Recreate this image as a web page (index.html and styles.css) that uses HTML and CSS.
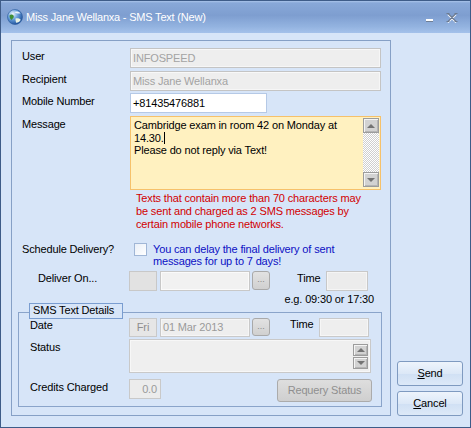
FILE: index.html
```html
<!DOCTYPE html>
<html>
<head>
<meta charset="utf-8">
<title>SMS Text</title>
<link rel="stylesheet" href="styles.css">
</head>
<body>
<div class="window">
  <div class="titlebar">
    <svg class="app-icon" viewBox="0 0 16 16" width="16" height="16">
      <defs>
        <radialGradient id="globe" cx="35%" cy="30%" r="75%">
          <stop offset="0" stop-color="#f2f8ff"/>
          <stop offset="0.45" stop-color="#6aa2dc"/>
          <stop offset="1" stop-color="#1b4d98"/>
        </radialGradient>
      </defs>
      <circle cx="8" cy="8" r="7.5" fill="url(#globe)"/>
      <path d="M2.5 6.5c1.5-1.5 3.5-1 4.2.6.6 1.6-1 2.4-2 3.8-1.3-.7-2.3-2.3-2.2-4.4z" fill="#3f8f35"/>
      <path d="M8.5 9.5c1.8-.4 4-.1 5.2 1.2-.7 1.7-2.6 3-4.6 3.1-.2-1.4-.8-2.8-.6-4.3z" fill="#e8f1e0"/>
      <path d="M7.5 3c1.8-1 4.6-.6 6 1.4-1.8.4-4.3.3-6-1.4z" fill="#ffffff" opacity="0.85"/>
      <circle cx="8" cy="8" r="7.5" fill="none" stroke="#2a5a9c" stroke-width="0.6"/>
    </svg>
    <span class="title">Miss Jane Wellanxa - SMS Text (New)</span>
    <span class="min-btn"></span>
    <svg class="close-btn" viewBox="0 0 12 12" width="12" height="12">
      <path d="M2 2.5 L10 10.5 M10 2.5 L2 10.5" stroke="#ffffff" stroke-width="1.6" fill="none"/>
      <path d="M2 1.5 L10 9.5 M10 1.5 L2 9.5 M0.5 1.5h3 M8.5 1.5h3 M0.5 9.5h3 M8.5 9.5h3" stroke="#6c7b91" stroke-width="1.2" fill="none"/>
    </svg>
  </div>

  <div class="client">
    <div class="panel">
      <div class="row r-user">
        <span class="lbl">User</span>
        <div class="field ro w-wide">INFOSPEED</div>
      </div>
      <div class="row r-recip">
        <span class="lbl">Recipient</span>
        <div class="field ro w-wide">Miss Jane Wellanxa</div>
      </div>
      <div class="row r-mobile">
        <span class="lbl">Mobile Number</span>
        <div class="field edit w-mobile">+81435476881</div>
      </div>
      <div class="row r-msg">
        <span class="lbl">Message</span>
        <div class="message">
          <div class="msg-text">Cambridge exam in room 42 on Monday at<br>14.30.<span class="caret"></span><br>Please do not reply via Text!</div>
          <div class="vscroll">
            <span class="sbtn"><i class="tri-up"></i></span>
            <span class="track"></span>
            <span class="sbtn"><i class="tri-down"></i></span>
          </div>
        </div>
      </div>
      <div class="note">Texts that contain more than 70 characters may<br>be sent and charged as 2 SMS messages by<br>certain mobile phone networks.</div>

      <div class="row r-sched">
        <span class="lbl lbl-sched">Schedule Delivery?</span>
        <span class="checkbox"></span>
        <span class="sched-hint">You can delay the final delivery of sent<br>messages for up to 7 days!</span>
      </div>

      <div class="row r-deliver">
        <span class="lbl lbl-deliver">Deliver On...</span>
        <div class="field box-day"></div>
        <div class="field box-date"></div>
        <span class="dots-btn">...</span>
        <span class="time-lbl t1">Time</span>
        <div class="field box-time1"></div>
      </div>

      <div class="eg">e.g. 09:30 or 17:30</div>

      <div class="group">
        <span class="legend">SMS Text Details</span>
        <div class="grow g-date">
          <span class="glbl">Date</span>
          <div class="field box-fri">Fri</div>
          <div class="field box-gdate">01 Mar 2013</div>
          <span class="dots-btn">...</span>
          <span class="time-lbl t2">Time</span>
          <div class="field box-time2"></div>
        </div>
        <div class="grow g-status">
          <span class="glbl">Status</span>
          <div class="status-box">
            <div class="mini-scroll">
              <span class="sbtn small"><i class="tri-up"></i></span>
              <span class="sbtn small"><i class="tri-down"></i></span>
            </div>
          </div>
        </div>
        <div class="grow g-credits">
          <span class="glbl">Credits Charged</span>
          <div class="field box-credits">0.0</div>
          <span class="requery">Requery Status</span>
        </div>
      </div>
    </div>

    <div class="side">
      <span class="btn"><u>S</u>end</span>
      <span class="btn"><u>C</u>ancel</span>
    </div>
  </div>
</div>
</body>
</html>
```

FILE: styles.css
```css
* { box-sizing: border-box; }
html, body { margin: 0; padding: 0; }
body {
  font-family: "Liberation Sans", Arial, sans-serif;
  font-size: 11px;
  letter-spacing: -0.15px;
  color: #000;
  background: #ffffff;
}

.window {
  width: 471px;
  height: 428px;
  border: 1px solid #3e5c88;
  background: #d7e5f8;
  display: flex;
  flex-direction: column;
}

/* ---------- title bar ---------- */
.titlebar {
  height: 32px;
  flex: none;
  display: flex;
  align-items: center;
  padding-left: 6px;
  color: #fff;
  background: linear-gradient(#a9c4ea 0, #88a8d8 2px, #7e9ed0 45%, #93b3e0 80%, #a4c1ea 100%);
}
.app-icon { flex: none; margin-top: -1px; }
.title {
  flex: 1;
  margin-left: 3px;
  font-size: 11px;
  letter-spacing: -0.2px;
  line-height: 14px;
}
.min-btn {
  align-self: flex-start;
  margin-top: 18px;
  width: 7px;
  height: 3px;
  background: #ffffff;
  border-bottom: 1px solid #6f7f96;
  margin-right: 13px;
}
.close-btn {
  align-self: flex-start;
  margin-top: 11px;
  margin-right: 12px;
  flex: none;
}

/* ---------- client ---------- */
.client {
  flex: 1;
  display: flex;
  padding: 7px 0 0 10px;
}
.panel {
  width: 380px;
  height: 376px;
  border: 1px solid #86a0c6;
  display: flex;
  flex-direction: column;
  flex: none;
}

.row {
  display: flex;
  align-items: flex-start;
  padding-left: 10px;
}
.lbl {
  width: 108px;
  flex: none;
  padding-top: 2px;
  line-height: 13px;
}
.r-user { margin-top: 7px; }
.r-recip { margin-top: 3px; }
.r-mobile { margin-top: 2px; }
.r-msg { margin-top: 3px; }

.field {
  height: 20px;
  border: 1px solid #c4c4c4;
  line-height: 18px;
  padding: 0 2px;
  flex: none;
  white-space: nowrap;
}
.ro {
  background: #eeeeee;
  color: #a3a3a3;
  box-shadow: inset 1px 1px 0 #f8f8f8, inset -1px -1px 0 #f6f6f6;
}
.w-wide { width: 251px; }
.edit {
  background: #ffffff;
  border-color: #b5c9e6;
}
.w-mobile { width: 137px; }

/* message box */
.message {
  width: 251px;
  height: 74px;
  border: 1px solid #f6c16a;
  background: #fff1c0;
  display: flex;
  flex: none;
}
.msg-text {
  flex: 1;
  padding: 2px 3px;
  line-height: 12.5px;
}
.caret {
  display: inline-block;
  width: 1px;
  height: 12px;
  background: #000;
  vertical-align: -2px;
}
.vscroll {
  width: 16px;
  margin: 1px 1px 2px 0;
  display: flex;
  flex-direction: column;
}
.track {
  flex: 1;
  background: repeating-conic-gradient(#cfcfcf 0 25%, #ffffff 0 50%) 0 0 / 2px 2px;
}
.sbtn {
  height: 15px;
  flex: none;
  background: #d2d2d2;
  border: 1px solid #9c9c9c;
  box-shadow: inset 1px 1px 0 #f4f4f4, inset -1px -1px 0 #b5b5b5;
  display: flex;
  align-items: center;
  justify-content: center;
}
.sbtn.small { width: 15px; height: 12px; }
.tri-up {
  width: 0; height: 0;
  border-left: 4px solid transparent;
  border-right: 4px solid transparent;
  border-bottom: 4px solid #737373;
}
.tri-down {
  width: 0; height: 0;
  border-left: 4px solid transparent;
  border-right: 4px solid transparent;
  border-top: 4px solid #737373;
}

.note {
  margin: 2px 0 0 124px;
  line-height: 13px;
  color: #d20000;
}

/* schedule */
.r-sched { margin-top: 12px; }
.lbl-sched { padding-top: 0; line-height: 12px; width: 112px; }
.checkbox {
  width: 13px;
  height: 13px;
  flex: none;
  border: 1px solid #a0b6d6;
  background: linear-gradient(135deg, #e9eff8, #ffffff);
}
.sched-hint {
  margin-left: 6px;
  line-height: 12px;
  color: #0c10c4;
}

/* deliver */
.r-deliver { margin-top: 4px; }
.lbl-deliver { width: 107px; padding-left: 16px; padding-top: 1px; }
.box-day {
  width: 28px;
  height: 20px;
  background: #e2e2e2;
  border-color: #c8c8c8;
}
.box-date {
  width: 90px;
  height: 20px;
  margin-left: 3px;
  background: #f1f1f1;
  border-color: #c8c8c8;
  box-shadow: inset 0 0 0 1px #fafafa;
}
.dots-btn {
  width: 18px;
  height: 19px;
  margin-left: 2px;
  flex: none;
  border: 1px solid #a9a9a9;
  border-radius: 3px;
  background: linear-gradient(#e2e2e2, #d0d0d0);
  color: #8a8a8a;
  font-size: 9px;
  text-align: center;
  line-height: 15px;
  letter-spacing: 0;
}
.time-lbl {
  flex: none;
  width: 29px;
  line-height: 13px;
  padding-top: 1px;
}
.t1 { margin-left: 27px; }
.box-time1 {
  width: 42px;
  height: 20px;
  background: #ececec;
  border-color: #c8c8c8;
  box-shadow: inset 0 0 0 1px #f5f5f5;
}

.eg {
  margin-top: 2px;
  line-height: 13px;
  text-align: right;
  padding-right: 16px;
}

/* group box */
.group {
  position: relative;
  margin: 6px 8px 0 6px;
  border: 1px solid #8aa4ca;
  padding: 5px 0 4px 11px;
}
.legend {
  position: absolute;
  left: 10px;
  top: -10px;
  width: 94px;
  height: 16px;
  border: 1px solid #7a9dd0;
  background: #d7e5f8;
  padding-left: 3px;
  line-height: 13px;
  white-space: nowrap;
}
.grow {
  display: flex;
  align-items: flex-start;
}
.glbl {
  width: 99px;
  flex: none;
  line-height: 13px;
  padding-top: 1px;
}
.box-fri {
  width: 28px;
  height: 19px;
  line-height: 17px;
  background: #e6e6e6;
  border-color: #c9c9c9;
  color: #8e8e8e;
  text-align: center;
}
.box-gdate {
  width: 90px;
  height: 19px;
  line-height: 17px;
  margin-left: 3px;
  background: #eeeeee;
  border-color: #c9c9c9;
  color: #9a9a9a;
  box-shadow: inset 0 0 0 1px #f6f6f6;
}
.g-date .dots-btn { height: 18px; line-height: 14px; }
.t2 { margin-left: 20px; padding-top: 0; }
.box-time2 {
  width: 50px;
  height: 19px;
  background: #eeeeee;
  border-color: #c9c9c9;
  box-shadow: inset 0 0 0 1px #f6f6f6;
}

.g-status { margin-top: 2px; }
.g-status .glbl { padding-top: 2px; }
.status-box {
  width: 242px;
  height: 34px;
  flex: none;
  border: 1px solid #c9c9c9;
  background: #efefef;
  box-shadow: inset 0 0 0 1px #f7f7f7;
  display: flex;
  align-items: center;
  justify-content: flex-end;
  padding-right: 2px;
}
.mini-scroll {
  display: flex;
  flex-direction: column;
  gap: 1px;
}

.g-credits { margin-top: 6px; }
.g-credits .glbl { padding-top: 2px; }
.box-credits {
  width: 32px;
  height: 20px;
  background: #ececec;
  border-color: #c9c9c9;
  color: #9a9a9a;
  text-align: right;
  padding-right: 3px;
}
.requery {
  margin-left: 116px;
  width: 95px;
  height: 23px;
  flex: none;
  border: 1px solid #ababab;
  border-radius: 3px;
  background: linear-gradient(#dedede, #cfcfcf);
  color: #8f8f8f;
  text-align: center;
  line-height: 21px;
}

/* side buttons */
.side {
  height: 376px;
  display: flex;
  flex-direction: column;
  justify-content: flex-end;
  gap: 5px;
  padding-left: 6px;
}
.btn {
  width: 66px;
  height: 25px;
  border: 1px solid #7f9ac0;
  border-radius: 3px;
  background: linear-gradient(#eef4fc, #dce8f7 50%, #d0e0f4 51%, #dde9f8);
  text-align: center;
  line-height: 23px;
  font-size: 11px;
}
.btn u { text-decoration: underline; }
```
